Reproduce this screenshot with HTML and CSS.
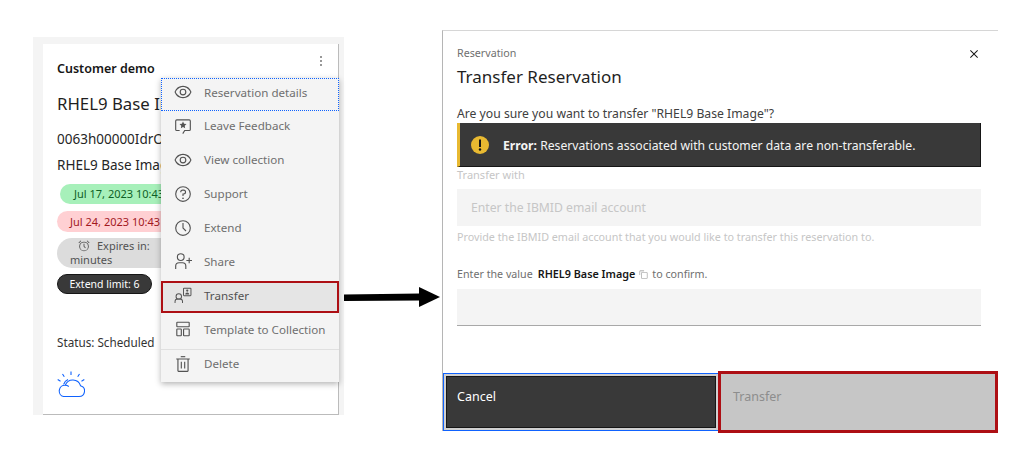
FILE: index.html
```html
<!DOCTYPE html>
<html lang="en">
<head>
<meta charset="UTF-8" />
<meta name="viewport" content="width=device-width, initial-scale=1" />
<title>Transfer Reservation</title>
<link rel="stylesheet" href="styles.css">
</head>
<body>

<div class="page">

  <div class="panel">
    <div class="card">
      <div class="card-head">
        <div class="card-title">Customer demo</div>
        <div class="overflow-btn">
          <svg width="16" height="16" viewBox="0 0 32 32" fill="#161616"><circle cx="16" cy="8" r="1.600"/><circle cx="16" cy="16" r="1.600"/><circle cx="16" cy="24" r="1.600"/></svg>
        </div>
      </div>
      <div class="card-name">RHEL9 Base Image</div>
      <div class="card-id">0063h00000IdrOAAAZ</div>
      <div class="card-sub">RHEL9 Base Image</div>
      <div class="pill pill-green">Jul 17, 2023 10:43</div>
      <div class="pill pill-red">Jul 24, 2023 10:43</div>
      <div class="pill pill-gray">
        <div class="expires">
          <svg width="14" height="14" viewBox="0 0 32 32" fill="#525252"><path d="M16 28a11 11 0 1 1 11-11 11 11 0 0 1-11 11Zm0-20a9 9 0 1 0 9 9 9 9 0 0 0-9-9Z"/><path d="M18.600 21 15 17.400V11h2v5.600l3 3ZM3.300 8.300 8.300 3.300l1.400 1.400-5 5ZM22.300 4.700l1.400-1.400 5 5-1.400 1.400Z"/></svg>
          Expires in:
        </div>
        <div>minutes</div>
      </div>
      <div class="pill pill-dark">Extend limit: 6</div>
      <div class="card-status">Status: Scheduled</div>
      <svg class="cloud" width="28" height="27" viewBox="0 0 28 27" fill="none" stroke="#0f62fe" stroke-width="1.100">
        <path d="M6.500 25.500H22A5.500 5.500 0 0 0 23.500 14.700A8 8 0 0 0 8.300 14.300A5.700 5.700 0 0 0 6.500 25.500Z"/>
        <path d="M8.300 14.300A6 6 0 0 1 11.800 15.500M14 0.500V4M5.500 3L7.300 5.800M22.500 3L20.700 5.800M0.700 8.500L3.500 10.200M27.300 8.500L24.500 10.200M6.600 13.500A8 8 0 0 1 11 8.600"/>
      </svg>
    </div>

    <ul class="menu">
      <li class="menu-item menu-focus">
        <svg class="menu-icon" viewBox="0 0 32 32"><path d="M30.940 15.660A16.690 16.690 0 0 0 16 5 16.690 16.690 0 0 0 1.060 15.660a1 1 0 0 0 0 .68A16.690 16.690 0 0 0 16 27a16.690 16.690 0 0 0 14.940-10.660 1 1 0 0 0 0-.68ZM16 25c-5.300 0-10.900-3.930-12.930-9C5.100 10.930 10.700 7 16 7s10.900 3.930 12.930 9C26.900 21.070 21.300 25 16 25Z"/><path d="M16 10a6 6 0 1 0 6 6 6 6 0 0 0-6-6Zm0 10a4 4 0 1 1 4-4 4 4 0 0 1-4 4Z"/></svg>
        Reservation details
      </li>
      <li class="menu-item">
        <svg class="menu-icon" viewBox="0 0 32 32"><path d="M5 4h22a3 3 0 0 1 3 3v15a3 3 0 0 1-3 3h-7.400l-3.200 5-1.700-1 3.800-6H27a1 1 0 0 0 1-1V7a1 1 0 0 0-1-1H5a1 1 0 0 0-1 1v15a1 1 0 0 0 1 1h5v2H5a3 3 0 0 1-3-3V7a3 3 0 0 1 3-3Z"/><path d="m16 8 1.900 3.900 4.300.6-3.100 3 .7 4.300-3.800-2-3.800 2 .7-4.300-3.100-3 4.300-.6Z"/></svg>
        Leave Feedback
      </li>
      <li class="menu-item">
        <svg class="menu-icon" viewBox="0 0 32 32"><path d="M30.940 15.660A16.690 16.690 0 0 0 16 5 16.690 16.690 0 0 0 1.060 15.660a1 1 0 0 0 0 .68A16.690 16.690 0 0 0 16 27a16.690 16.690 0 0 0 14.940-10.660 1 1 0 0 0 0-.68ZM16 25c-5.300 0-10.900-3.930-12.930-9C5.100 10.930 10.700 7 16 7s10.900 3.930 12.930 9C26.900 21.070 21.300 25 16 25Z"/><path d="M16 10a6 6 0 1 0 6 6 6 6 0 0 0-6-6Zm0 10a4 4 0 1 1 4-4 4 4 0 0 1-4 4Z"/></svg>
        View collection
      </li>
      <li class="menu-item">
        <svg class="menu-icon" viewBox="0 0 32 32"><path d="M16 2a14 14 0 1 0 14 14A14 14 0 0 0 16 2Zm0 26a12 12 0 1 1 12-12 12 12 0 0 1-12 12Z"/><circle cx="16" cy="23.500" r="1.500"/><path d="M17 8h-1.500a4.490 4.490 0 0 0-4.500 4.500v.5h2v-.5a2.500 2.500 0 0 1 2.500-2.500H17a2.500 2.500 0 0 1 0 5h-2v4.500h2V17a4.500 4.500 0 0 0 0-9Z"/></svg>
        Support
      </li>
      <li class="menu-item">
        <svg class="menu-icon" viewBox="0 0 32 32"><path d="M16 30a14 14 0 1 1 14-14 14 14 0 0 1-14 14Zm0-26a12 12 0 1 0 12 12A12 12 0 0 0 16 4Z"/><path d="M20.590 22 15 16.410V7h2v8.580l5 5.010L20.590 22z"/></svg>
        Extend
      </li>
      <li class="menu-item">
        <svg class="menu-icon" viewBox="0 0 32 32"><path d="M32 14h-4v-4h-2v4h-4v2h4v4h2v-4h4v-2z"/><path d="M12 4a5 5 0 1 1-5 5 5 5 0 0 1 5-5m0-2a7 7 0 1 0 7 7 7 7 0 0 0-7-7z"/><path d="M22 30h-2v-5a5 5 0 0 0-5-5H9a5 5 0 0 0-5 5v5H2v-5a7 7 0 0 1 7-7h6a7 7 0 0 1 7 7z"/></svg>
        Share
      </li>
      <li class="menu-item menu-hot">
        <svg class="menu-icon" viewBox="0 0 32 32"><path d="M8.500 14.500a4 4 0 1 1-4 4 4 4 0 0 1 4-4m0-1.700a5.700 5.700 0 1 0 5.700 5.700 5.700 5.700 0 0 0-5.700-5.700Z"/><path d="M16 30h-1.700v-2.500a3.500 3.500 0 0 0-3.500-3.500H6.200a3.500 3.500 0 0 0-3.500 3.500V30H1v-2.500a5.200 5.200 0 0 1 5.200-5.200h4.600a5.200 5.200 0 0 1 5.200 5.200Z"/><path d="M18 3h11a2 2 0 0 1 2 2v11a2 2 0 0 1-2 2H18a2 2 0 0 1-2-2V5a2 2 0 0 1 2-2Zm0 1.700a.3.3 0 0 0-.3.3v11a.3.3 0 0 0 .3.3h11a.3.3 0 0 0 .3-.3V5a.3.3 0 0 0-.3-.3Z"/><circle cx="23.500" cy="8" r="2"/><path d="M20 15c0-2 1.500-3.500 3.500-3.500S27 13 27 15Z"/></svg>
        Transfer
      </li>
      <li class="menu-item">
        <svg class="menu-icon" viewBox="0 0 32 32"><path d="M26 3H6a2 2 0 0 0-2 2v6a2 2 0 0 0 2 2h20a2 2 0 0 0 2-2V5a2 2 0 0 0-2-2Zm0 8H6V5h20ZM12 15H6a2 2 0 0 0-2 2v10a2 2 0 0 0 2 2h6a2 2 0 0 0 2-2V17a2 2 0 0 0-2-2Zm0 12H6V17h6ZM26 15h-8a2 2 0 0 0-2 2v10a2 2 0 0 0 2 2h8a2 2 0 0 0 2-2V17a2 2 0 0 0-2-2Zm0 12h-8V17h8Z"/></svg>
        Template to Collection
      </li>
      <li class="menu-item menu-last">
        <svg class="menu-icon" viewBox="0 0 32 32"><path d="M12 12h2v12h-2zM18 12h2v12h-2z"/><path d="M4 6v2h2v20a2 2 0 0 0 2 2h16a2 2 0 0 0 2-2V8h2V6ZM8 28V8h16v20Z"/><path d="M12 2h8v2h-8z"/></svg>
        Delete
      </li>
    </ul>
  </div>

  <svg class="arrow" width="98" height="30" viewBox="0 0 98 30">
    <path d="M0 13.500 76 12.500 76 19.500 0 20Z" fill="#000"/>
    <path d="M75 6 96 16 75 26Z" fill="#000"/>
  </svg>

  <div class="dialog">
    <div class="dialog-body">
      <div class="dialog-head">
        <div>
          <div class="dialog-label">Reservation</div>
          <div class="dialog-title">Transfer Reservation</div>
        </div>
        <svg class="close" width="16" height="16" viewBox="0 0 32 32" fill="#161616"><path d="M24 9.400 22.600 8 16 14.600 9.400 8 8 9.400l6.600 6.600L8 22.600 9.400 24l6.600-6.600 6.600 6.600 1.400-1.400-6.600-6.600L24 9.400z"/></svg>
      </div>
      <p class="question">Are you sure you want to transfer "RHEL9 Base Image"?</p>
      <div class="notice">
        <svg width="20" height="20" viewBox="0 0 20 20"><circle cx="10" cy="10" r="9" fill="#e8b931"/><rect x="9" y="4.500" width="2" height="7.500" fill="#161616"/><circle cx="10" cy="14.500" r="1.200" fill="#161616"/></svg>
        <span><b>Error:</b> Reservations associated with customer data are non-transferable.</span>
      </div>
      <div class="field-label">Transfer with</div>
      <div class="field field-off">Enter the IBMID email account</div>
      <div class="field-help">Provide the IBMID email account that you would like to transfer this reservation to.</div>
      <div class="confirm">
        Enter the value <b>RHEL9 Base Image</b>
        <svg width="9" height="9" viewBox="0 0 32 32" fill="#8d8d8d"><path d="M28 10v18H10V10h18m0-2H10a2 2 0 0 0-2 2v18a2 2 0 0 0 2 2h18a2 2 0 0 0 2-2V10a2 2 0 0 0-2-2Z"/><path d="M4 18H2V4a2 2 0 0 1 2-2h14v2H4Z"/></svg>
        to confirm.
      </div>
      <div class="field field-line"></div>
    </div>
    <div class="dialog-foot">
      <div class="btn btn-cancel"><span class="btn-inner">Cancel</span></div>
      <div class="btn btn-transfer"><span class="btn-inner">Transfer</span></div>
    </div>
  </div>

</div>

</body>
</html>
```

FILE: styles.css
```css
* {
  box-sizing: border-box;
}
body {
  margin: 0;
  background: #fff;
  font-family: "Noto Sans", Roboto, Arial, sans-serif;
  color: #262626;
}
.page {
  display: flex;
  align-items: flex-start;
  width: 1024px;
  height: 460px;
  overflow: hidden;
  padding: 30px 0 0 33px;
}

/* left side: the card with its open menu */
.panel {
  position: relative;
  flex: none;
  width: 311px;
  height: 378px;
  margin-top: 7px;
  padding: 7px 5px 0 10px;
  background: #f4f4f4;
}
.card {
  height: 371px;
  padding: 0 0 0 14px;
  background: #fff;
  border-right: 1px solid #bbb;
  border-bottom: 1px solid #bbb;
  overflow: hidden;
}
.card-head {
  display: flex;
  justify-content: space-between;
  height: 34px;
}
.card-title {
  padding-top: 16px;
  font-size: 12.500px;
  font-weight: 600;
  color: #161616;
}
.overflow-btn {
  display: flex;
  align-items: center;
  justify-content: center;
  width: 34px;
  height: 34px;
  background: #fff;
}
.card-name {
  margin-top: 16px;
  font-size: 16.800px;
  line-height: 20px;
  color: #1f1f1f;
  white-space: nowrap;
}
.card-id {
  margin-top: 16px;
  font-size: 13.500px;
  line-height: 18px;
  white-space: nowrap;
}
.card-sub {
  margin-top: 8px;
  font-size: 13.500px;
  line-height: 18px;
  white-space: nowrap;
}
.pill {
  font-size: 11px;
  border-radius: 11px;
  white-space: nowrap;
}
.pill-green {
  width: 190px;
  height: 20px;
  margin: 10px 0 0 3px;
  padding-left: 14px;
  line-height: 20px;
  background: #a7f0ba;
  color: #0e6027;
}
.pill-red {
  width: 190px;
  height: 21px;
  margin-top: 7px;
  padding-left: 13px;
  line-height: 21px;
  background: #ffd0d3;
  color: #a2191f;
}
.pill-gray {
  width: 190px;
  height: 30px;
  margin-top: 6px;
  padding: 1px 0 0 13px;
  line-height: 14px;
  background: #dcdcdc;
  color: #525252;
  border-radius: 15px;
}
.expires {
  display: flex;
  align-items: center;
  gap: 6px;
  padding-left: 7px;
}
.pill-dark {
  width: 95px;
  height: 20px;
  margin-top: 6px;
  font-size: 10.500px;
  line-height: 18px;
  text-align: center;
  background: #393939;
  color: #fff;
  border: 1px solid #161616;
}
.card-status {
  margin-top: 39px;
  font-size: 11.700px;
  line-height: 18px;
  color: #333;
}
.cloud {
  display: block;
  margin-top: 20px;
}

.menu {
  position: absolute;
  left: 128px;
  top: 41px;
  width: 178px;
  margin: 0;
  padding: 0;
  list-style: none;
  background: #f4f4f4;
  box-shadow: 0 2px 6px rgba(0, 0, 0, 0.3);
}
.menu-item {
  display: flex;
  align-items: center;
  gap: 12px;
  height: 33px;
  margin-bottom: 0.875px;
  padding: 0 0 5px 13px;
  font-size: 11.600px;
  color: #6f6f6f;
  white-space: nowrap;
}
.menu-icon {
  flex: none;
  width: 18px;
  height: 18px;
  fill: #525252;
}
.menu-focus {
  outline: 1px dotted #0f62fe;
  outline-offset: -1px;
}
.menu-hot {
  height: 32px;
  margin-bottom: 1.875px;
  padding-bottom: 4px;
  background: #e5e5e5;
  color: #525252;
  outline: 2px solid #ad0f14;
  outline-offset: -2px;
}
.menu-last {
  margin-bottom: 0;
  border-top: 1px solid #e0e0e0;
}

.arrow {
  flex: none;
  margin-top: 251px;
}

/* right side: the dialog */
.dialog {
  flex: none;
  width: 556px;
  height: 401px;
  border-top: 1px solid #d6d6d6;
  border-left: 1px solid #b5b5b5;
  background: #fff;
}
.dialog-body {
  height: 340px;
  padding: 15px 17px 0 14px;
}
.dialog-head {
  display: flex;
  justify-content: space-between;
}
.dialog-label {
  font-size: 10.700px;
  line-height: 15px;
  color: #6f6f6f;
}
.dialog-title {
  margin-top: 4px;
  font-size: 17px;
  line-height: 24px;
  color: #1f1f1f;
}
.close {
  margin-right: -1px;
}
.question {
  margin: 16px 0 0;
  font-size: 12.200px;
  line-height: 18px;
  color: #404040;
}
.notice {
  display: flex;
  align-items: center;
  gap: 13px;
  height: 44px;
  padding: 1px 0 0 10px;
  border-left: 3px solid #e8b931;
  border-right: 1px solid #161616;
  border-bottom: 1px solid #161616;
  background: #393939;
  color: #f4f4f4;
  font-size: 12.200px;
}
.field-label {
  margin-top: 1px;
  font-size: 11px;
  line-height: 14px;
  color: #c6c6c6;
}
.field {
  height: 37px;
  background: #f4f4f4;
}
.field-off {
  margin-top: 7px;
  padding-left: 14px;
  font-size: 12.200px;
  line-height: 37px;
  color: #c6c6c6;
}
.field-help {
  margin-top: 4px;
  font-size: 10.750px;
  line-height: 14px;
  color: #c6c6c6;
}
.confirm {
  display: flex;
  align-items: center;
  gap: 4px;
  margin-top: 23px;
  font-size: 10.700px;
  line-height: 14px;
  color: #6f6f6f;
}
.confirm b {
  margin-left: 1px;
  font-size: 10.800px;
  color: #161616;
  font-weight: 600;
}
.field-line {
  margin-top: 8px;
  border-bottom: 1px solid #a8a8a8;
}

.dialog-foot {
  display: flex;
  align-items: flex-end;
}
.btn {
  font-size: 12.500px;
}
.btn-inner {
  display: block;
  height: 100%;
  padding: 11px 10px;
}
.btn-cancel {
  width: 276px;
  height: 58px;
  padding: 2px;
  border: 1px solid #0f62fe;
  background: #d0d0d0;
  color: #fff;
}
.btn-cancel .btn-inner {
  background: #393939;
  border: 1px solid #161616;
}
.btn-transfer {
  width: 280px;
  height: 62px;
  margin-left: -1px;
  margin-bottom: -2px;
  border: 3px solid #ad0f14;
  background: #c6c6c6;
  color: #8d8d8d;
}
.btn-transfer .btn-inner {
  padding: 14px 12px;
}
```
